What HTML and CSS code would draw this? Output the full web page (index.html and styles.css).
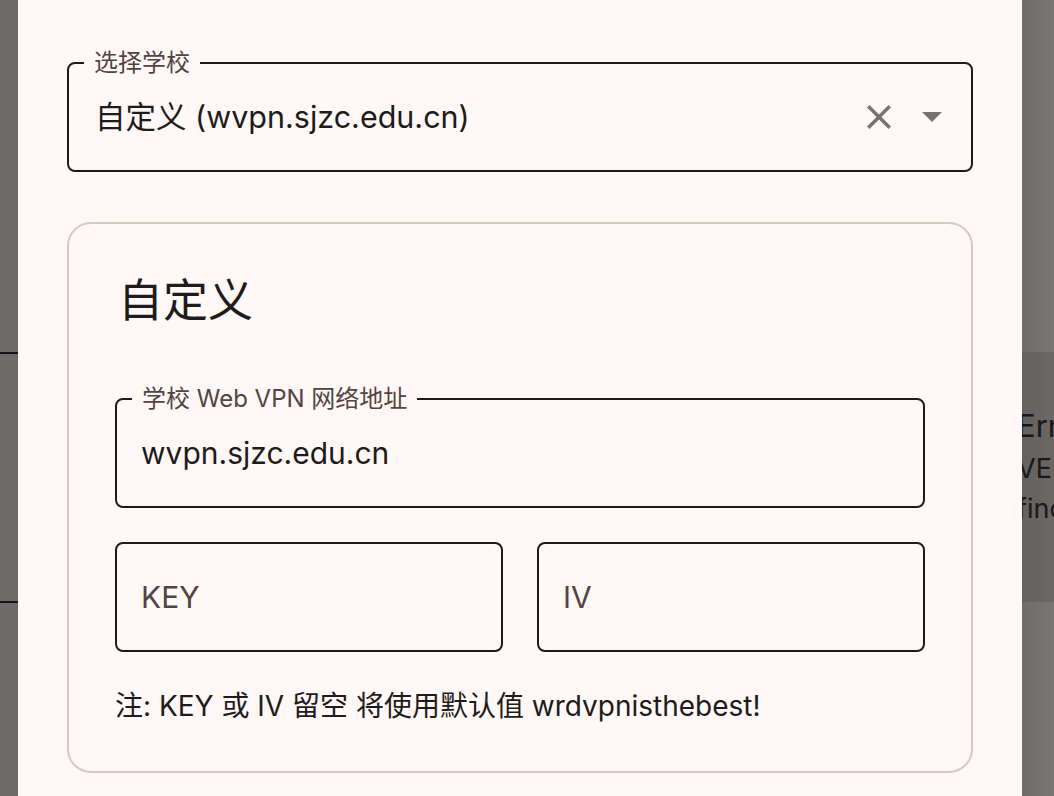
FILE: index.html
```html
<!DOCTYPE html>
<html lang="zh-CN">

<head>
    <meta charset="UTF-8">
    <meta name="viewport" content="width=device-width, initial-scale=1.0">
    <title>选择学校</title>
    <link rel="stylesheet" href="styles.css">
</head>

<body>
    <div class="backdrop">
        <div class="bg-left">
            <div class="bg-row"></div>
        </div>
        <div class="bg-middle"></div>
        <div class="bg-right">
            <div class="bg-alert">
                <p class="alert-title">Error</p>
                <p>VERSION</p>
                <p>find</p>
            </div>
        </div>
    </div>

    <div class="dialog">
        <div class="field select-field">
            <span class="field-label">选择学校</span>
            <span class="field-value">自定义 (wvpn.sjzc.edu.cn)</span>
            <span class="field-icons">
                <svg class="icon-clear" width="24" height="24" viewBox="5 5 14 14">
                    <path d="M19 6.41L17.59 5 12 10.59 6.41 5 5 6.41 10.59 12 5 17.59 6.41 19 12 13.41 17.59 19 19 17.59 13.41 12z" />
                </svg>
                <svg class="icon-arrow" width="20" height="10" viewBox="7 10 10 5">
                    <path d="M7 10l5 5 5-5z" />
                </svg>
            </span>
        </div>

        <section class="card">
            <h2 class="card-title">自定义</h2>

            <div class="field">
                <span class="field-label">学校 Web VPN 网络地址</span>
                <span class="field-value">wvpn.sjzc.edu.cn</span>
            </div>

            <div class="field-row">
                <div class="field">
                    <span class="field-placeholder">KEY</span>
                </div>
                <div class="field">
                    <span class="field-placeholder">IV</span>
                </div>
            </div>

            <p class="note">注: KEY 或 IV 留空 将使用默认值 wrdvpnisthebest!</p>
        </section>
    </div>
</body>

</html>
```

FILE: styles.css
```css
* {
    margin: 0;
    padding: 0;
    box-sizing: border-box;
}

body {
    width: 1054px;
    height: 796px;
    overflow: hidden;
    background: #7a7676;
    font-family: "Inter", "Noto Sans CJK SC", sans-serif;
    color: #1d1b1b;
}

/* page behind the dialog (already dimmed by the scrim) */
.backdrop {
    display: flex;
    height: 796px;
}

.bg-left {
    width: 18px;
    background: #6e6a69;
}

.bg-row {
    margin-top: 352px;
    height: 251px;
    border-top: 2px solid #161414;
    border-bottom: 2px solid #161414;
}

.bg-middle {
    flex: 1;
}

.bg-right {
    width: 35px;
    background: linear-gradient(90deg, #6f6b6a, #7a7676);
    overflow: hidden;
}

.bg-alert {
    margin-top: 352px;
    height: 250px;
    padding-top: 51px;
    background: linear-gradient(90deg, #646060, #6b6766);
    white-space: nowrap;
    color: #1a1818;
    font-size: 27px;
    line-height: 40px;
    text-indent: -2px;
}

.bg-alert .alert-title {
    font-size: 31px;
    line-height: 46px;
}

/* dialog */
.dialog {
    position: fixed;
    top: 0;
    left: 18px;
    width: 1004px;
    height: 900px;
    background: #fff8f6;
    padding: 62px 49px 0;
}

.field {
    position: relative;
    height: 110px;
    border: 2px solid #1f1a1a;
    border-radius: 8px;
    display: flex;
    align-items: center;
    padding: 0 24px;
}

.field-label {
    position: absolute;
    top: -15px;
    left: 15px;
    padding: 0 10px;
    background: #fff8f6;
    font-size: 24px;
    line-height: 28px;
    color: #524443;
}

.field-value {
    flex: 1;
    font-size: 30px;
    line-height: 40px;
    color: #1d1b1b;
}

.field-placeholder {
    font-size: 30px;
    line-height: 40px;
    color: #524443;
}

.select-field {
    padding-left: 26px;
    padding-right: 29px;
}

.select-field .field-value {
    font-size: 30.5px;
}

.field-icons {
    display: flex;
    align-items: center;
    gap: 31px;
}

.field-icons svg {
    fill: #777271;
    display: block;
}

/* custom school card */
.card {
    margin-top: 50px;
    border: 2px solid #dcc6c4;
    border-radius: 24px;
    padding: 49px 46px 45px;
}

.card-title {
    font-size: 45px;
    font-weight: 400;
    line-height: 56px;
    margin-left: 3px;
    margin-bottom: 69px;
}

.field-row {
    display: flex;
    gap: 34px;
    margin-top: 34px;
}

.field-row .field {
    flex: 1;
}

.note {
    margin-top: 34px;
    font-size: 28px;
    line-height: 40px;
}
```
